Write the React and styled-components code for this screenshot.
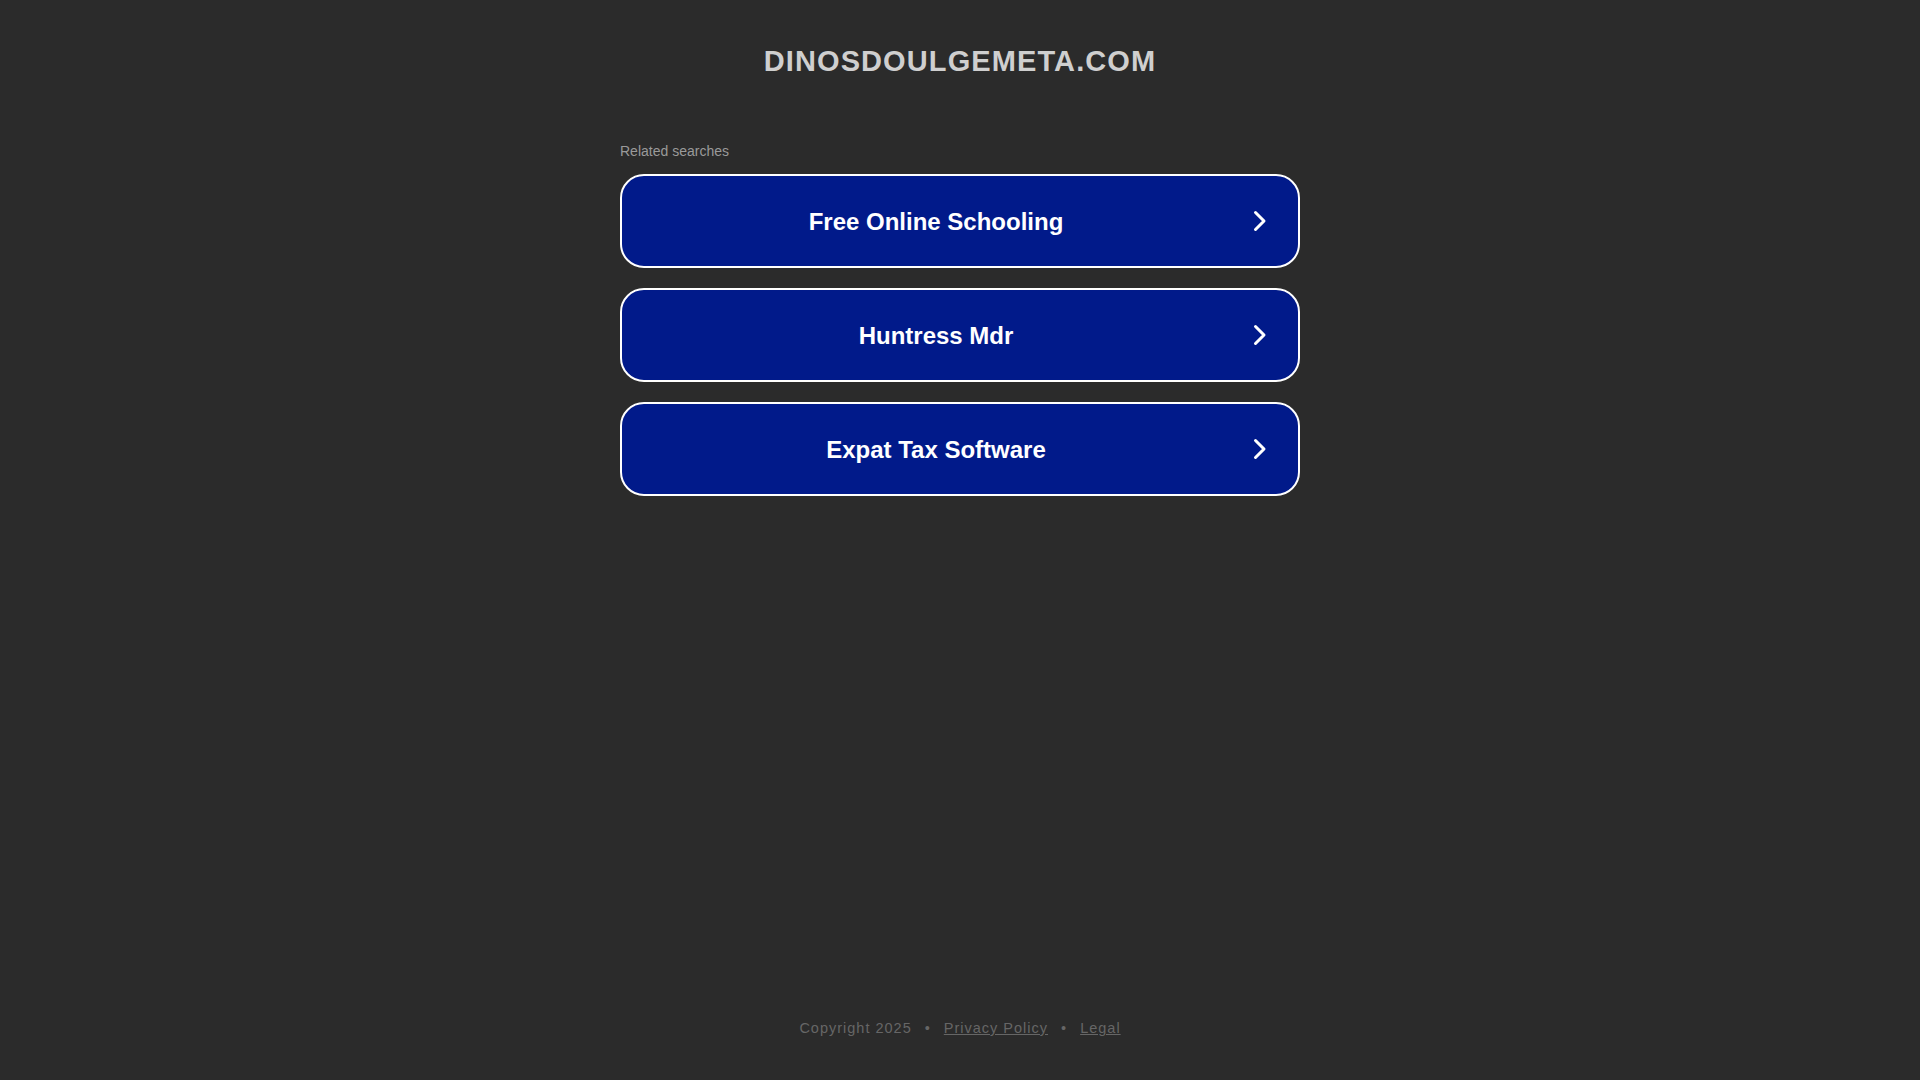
import React from 'react';
import styled, { createGlobalStyle } from 'styled-components';

const GlobalStyle = createGlobalStyle`
  html, body {
    margin: 0;
    padding: 0;
    background: #2b2b2b;
  }
  body {
    font-family: Arial, "Liberation Sans", Helvetica, sans-serif;
  }
`;

const searches = ['Free Online Schooling', 'Huntress Mdr', 'Expat Tax Software'];

const Chevron = () => (
  <svg width="14" height="22" viewBox="0 0 14 22" fill="none">
    <path d="M2.5 2.5 L11 11 L2.5 19.5" stroke="#fff" strokeWidth="3" strokeLinecap="round" strokeLinejoin="round" />
  </svg>
);

const App = () => {
  return (
    <Page>
      <GlobalStyle />
      <Header>
        <Domain>dinosdoulgemeta.com</Domain>
      </Header>
      <Main>
        <Label>Related searches</Label>
        <List>
          {searches.map(text => (
            <SearchLink key={text} href="#">
              <span>{text}</span>
              <Arrow>
                <Chevron />
              </Arrow>
            </SearchLink>
          ))}
        </List>
      </Main>
      <Footer>
        Copyright 2025
        <Dot>•</Dot>
        <FootLink href="#">Privacy Policy</FootLink>
        <Dot>•</Dot>
        <FootLink href="#">Legal</FootLink>
      </Footer>
    </Page>
  );
};

const Page = styled.div`
  min-height: 100vh;
  display: flex;
  flex-direction: column;
  align-items: center;
`;

const Header = styled.header`
  padding-top: 45px;
  text-align: center;
`;

const Domain = styled.h1`
  margin: 0;
  font-size: 29px;
  font-weight: 700;
  line-height: 32px;
  letter-spacing: 1.1px;
  text-transform: uppercase;
  color: #cfcfcf;
`;

const Main = styled.main`
  width: 680px;
  margin-top: 66px;
  flex: 1;
`;

const Label = styled.div`
  font-size: 14px;
  line-height: 16px;
  color: #9a9a9a;
  margin-bottom: 15px;
`;

const List = styled.div`
  display: flex;
  flex-direction: column;
  gap: 20px;
`;

const SearchLink = styled.a`
  position: relative;
  display: flex;
  align-items: center;
  justify-content: center;
  height: 94px;
  box-sizing: border-box;
  border: 2px solid #fff;
  border-radius: 24px;
  background: #011a8a;
  color: #fff;
  text-decoration: none;
  font-size: 24px;
  font-weight: 700;
  padding: 2px 48px 0 0;
`;

const Arrow = styled.span`
  position: absolute;
  right: 31px;
  top: 50%;
  transform: translateY(-50%);
  display: flex;
`;

const Footer = styled.footer`
  padding-bottom: 44px;
  font-size: 14.5px;
  letter-spacing: 1px;
  color: #666;
`;

const Dot = styled.span`
  margin: 0 13px;
`;

const FootLink = styled.a`
  color: #666;
  text-decoration: underline;
`;

export default App;
